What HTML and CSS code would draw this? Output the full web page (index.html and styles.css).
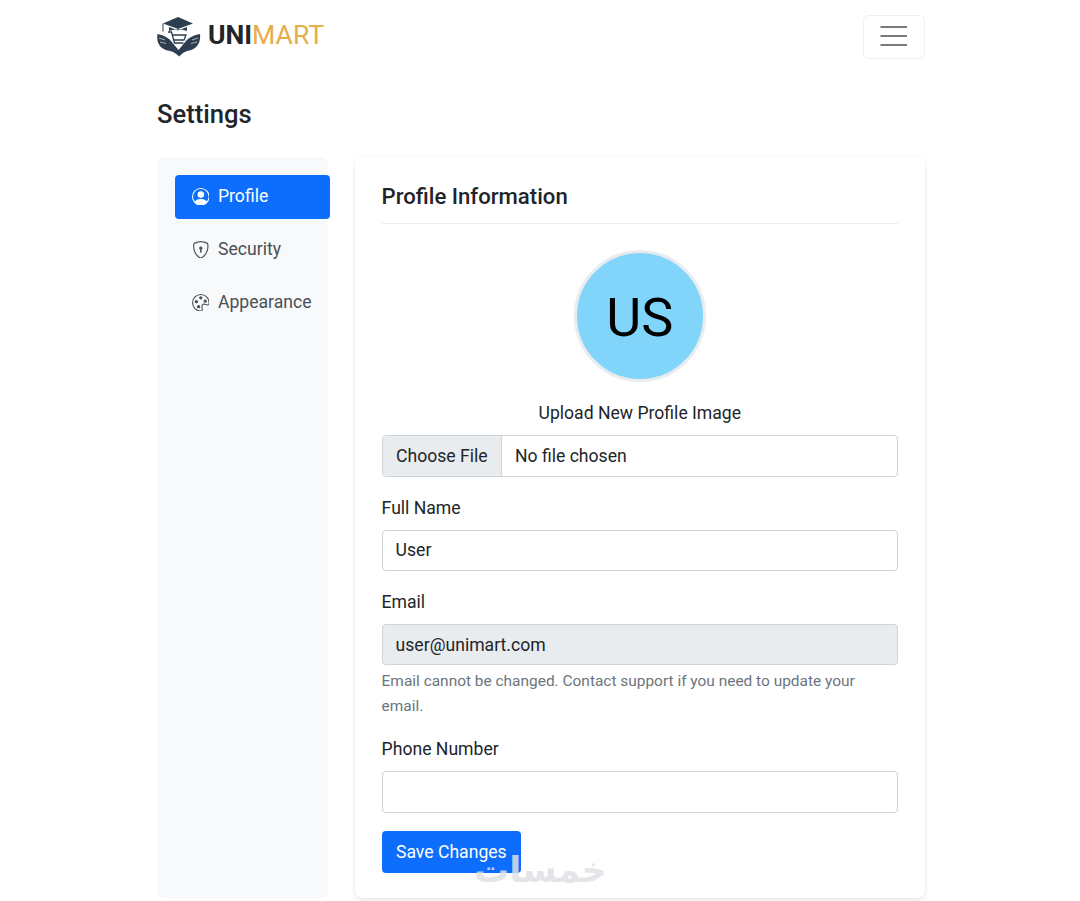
FILE: index.html
```html
<!DOCTYPE html>
<html>
<head>
    <title>Settings - UniMart</title>
    <link rel="stylesheet" href="styles.css">
</head>
<body>
    <nav class="navbar">
        <a class="brand" href="#">
            <svg class="brand-logo" viewBox="0 0 44 40" width="44" height="40">
                <!-- cap -->
                <path fill="#2c3e50" d="M21 0 L36 6.5 L21 12 L6 6.5 Z"/>
                <path fill="#2c3e50" d="M12 10 L21 13.5 L30 10 L30 14 Q21 10.5 12 14 Z"/>
                <rect fill="#2c3e50" x="5.5" y="6.5" width="1" height="8"/>
                <!-- cart -->
                <path fill="none" stroke="#2c3e50" stroke-width="1.3" d="M11 15 H14.5 L17.5 26 H26.5 M15.5 18 H29 L27 23 H17"/>
                <!-- wings -->
                <path fill="#2c3e50" d="M0.5 17 Q9 18.5 14 24 L21.5 33 L29 24 Q34 18.5 43 17 Q44 26 38 31 Q34 34 30 34 Q26 35 22 39.5 Q18 35 13 34 Q9 34 5 31 Q-1 26 0.5 17 Z"/>
                <path fill="none" stroke="#fff" stroke-width=".6" d="M2 21 L8 23 M3 25 L9 26.5 M41 21 L35 23 M40 25 L34 26.5"/>
            </svg>
            <span class="brand-text"><b>UNI</b><span class="brand-accent">MART</span></span>
        </a>
        <button type="button" class="navbar-toggler" aria-label="Menu">
            <svg viewBox="0 0 30 30" width="30" height="30">
                <path stroke="#767b80" stroke-width="2.2" d="M1.5 5H28M1.5 14H28M1.5 23H28"/>
            </svg>
        </button>
    </nav>

    <div class="container">
        <h1 class="page-title">Settings</h1>
        <div class="settings-row">
            <aside class="sidebar">
                <a class="side-link active" href="#">
                    <svg class="side-icon" viewBox="0 0 16 16" fill="currentColor">
                        <path d="M11 6a3 3 0 1 1-6 0 3 3 0 0 1 6 0z"/>
                        <path fill-rule="evenodd" d="M0 8a8 8 0 1 1 16 0A8 8 0 0 1 0 8zm8-7a7 7 0 0 0-5.468 11.37C3.242 11.226 4.805 10 8 10s4.757 1.225 5.468 2.37A7 7 0 0 0 8 1z"/>
                    </svg>
                    Profile
                </a>
                <a class="side-link" href="#">
                    <svg class="side-icon" viewBox="0 0 16 16" fill="currentColor">
                        <path d="M5.338 1.59a61.44 61.44 0 0 0-2.837.856.481.481 0 0 0-.328.39c-.554 4.157.726 7.19 2.253 9.188a10.725 10.725 0 0 0 2.287 2.233c.346.244.652.42.893.533.12.057.218.095.293.118a.55.55 0 0 0 .101.025.615.615 0 0 0 .1-.025c.076-.023.174-.061.294-.118.24-.113.547-.29.893-.533a10.726 10.726 0 0 0 2.287-2.233c1.527-1.997 2.807-5.031 2.253-9.188a.48.48 0 0 0-.328-.39c-.651-.213-1.75-.56-2.837-.855C9.552 1.29 8.531 1.067 8 1.067c-.53 0-1.552.223-2.662.524zM5.072.56C6.157.265 7.31 0 8 0s1.843.265 2.928.56c1.11.3 2.229.655 2.887.87a1.54 1.54 0 0 1 1.044 1.262c.596 4.477-.787 7.795-2.465 9.99a11.775 11.775 0 0 1-2.517 2.453 7.159 7.159 0 0 1-1.048.625c-.28.132-.581.24-.829.24s-.548-.108-.829-.24a7.158 7.158 0 0 1-1.048-.625 11.777 11.777 0 0 1-2.517-2.453C1.928 10.487.545 7.169 1.141 2.692A1.54 1.54 0 0 1 2.185 1.43 62.456 62.456 0 0 1 5.072.56z"/>
                        <path d="M9.5 6.5a1.5 1.5 0 0 1-1 1.415l.385 1.99a.5.5 0 0 1-.491.595h-.788a.5.5 0 0 1-.49-.595l.384-1.99a1.5 1.5 0 1 1 2-1.415z"/>
                    </svg>
                    Security
                </a>
                <a class="side-link" href="#">
                    <svg class="side-icon" viewBox="0 0 16 16" fill="currentColor">
                        <path d="M8 5a1.5 1.5 0 1 0 0-3 1.5 1.5 0 0 0 0 3zm4 3a1.5 1.5 0 1 0 0-3 1.5 1.5 0 0 0 0 3zM5.5 7a1.5 1.5 0 1 1-3 0 1.5 1.5 0 0 1 3 0zm.5 6a1.5 1.5 0 1 0 0-3 1.5 1.5 0 0 0 0 3z"/>
                        <path d="M16 8c0 3.15-1.866 2.585-3.567 2.07C11.42 9.763 10.465 9.473 10 10c-.603.683-.475 1.819-.351 2.92C9.826 14.495 9.996 16 8 16a8 8 0 1 1 8-8zm-8 7c.611 0 .654-.171.655-.176.078-.146.124-.464.07-1.119-.014-.168-.037-.37-.061-.591-.052-.464-.112-1.005-.118-1.462-.01-.707.083-1.61.704-2.314.369-.417.845-.578 1.272-.618.404-.038.812.026 1.16.104.343.077.702.186 1.025.284l.028.008c.346.105.658.199.953.266.653.148.904.083.991.024C14.717 9.38 15 9.161 15 8a7 7 0 1 0-7 7z"/>
                    </svg>
                    Appearance
                </a>
            </aside>

            <main class="card">
                <h2 class="card-title">Profile Information</h2>
                <div class="avatar-box">
                    <div class="avatar">US</div>
                    <label class="avatar-label">Upload New Profile Image</label>
                </div>
                <div class="file-input">
                    <span class="file-btn">Choose File</span>
                    <span class="file-name">No file chosen</span>
                </div>

                <div class="field">
                    <label for="name">Full Name</label>
                    <input id="name" class="form-control" type="text" value="User">
                </div>
                <div class="field">
                    <label for="email">Email</label>
                    <input id="email" class="form-control" type="text" value="user@unimart.com" disabled>
                    <div class="form-text">Email cannot be changed. Contact support if you need to update your email.</div>
                </div>
                <div class="field">
                    <label for="phone">Phone Number</label>
                    <input id="phone" class="form-control" type="text">
                </div>
                <button type="button" class="btn-save">Save Changes</button>
            </main>
        </div>
    </div>

    <div class="watermark">خمسات</div>
</body>
</html>
```

FILE: styles.css
```css
* { box-sizing: border-box; }
body { margin: 0; height: 901px; overflow: hidden; background: #fff; color: #212529; font-family: Roboto, "Liberation Sans", sans-serif; font-size: 17.6px; line-height: 1.5; }
a { text-decoration: none; }

.navbar { width: 768px; height: 74px; margin-left: 157px; display: flex; align-items: center; justify-content: space-between; }
.brand { display: flex; align-items: center; gap: 7px; margin-top: -1px; }
.brand-text { font-size: 26.6px; line-height: 1; margin-top: -3px; color: #212529; }
.brand-text b { font-weight: 700; }
.brand-accent { color: #e5ae49; }
.navbar-toggler { width: 62px; height: 44px; padding: 0; background: none; border: 1px solid #f0f0f1; border-radius: 5px; display: flex; align-items: center; justify-content: center; }

.container { width: 768px; margin-left: 157px; }
.page-title { margin: 24px 0 26px; font-size: 25.6px; font-weight: 500; line-height: 33px; }
.settings-row { display: flex; align-items: stretch; gap: 27px; }

.sidebar { width: 171px; height: 741px; padding: 17.5px 0 0 17.6px; background: #f8f9fa; border-radius: 8px; flex: none; }
.side-link { width: 155.4px; height: 44px; margin-bottom: 9px; padding-left: 17px; display: flex; align-items: center; gap: 8.8px; color: #495057; border-radius: 4px; font-size: 17.6px; }
.side-link.active { background: #0d6efd; color: #fff; }
.side-icon { width: 17.6px; height: 17.6px; flex: none; }

.card { flex: 1; height: 741px; padding: 22px 27px 0 26.6px; background: #fff; border-radius: 8px; box-shadow: 0 2px 5px rgba(0, 0, 0, .1); }
.card-title { margin: 0 0 26px; padding-bottom: 9px; font-size: 22.15px; font-weight: 500; line-height: 35px; border-bottom: 1px solid #eceded; }

.avatar-box { text-align: center; }
.avatar { width: 132px; height: 132px; margin: 0 auto 18px; padding-top: 3px; display: flex; align-items: center; justify-content: center; background: #81d4fa; border: 3px solid #e9ecef; border-radius: 50%; color: #000; font-size: 54px; }
.avatar-label { display: block; margin-bottom: 9px; }

.file-input { height: 42px; display: flex; align-items: stretch; border: 1px solid #ced4da; border-radius: 4px; overflow: hidden; }
.file-btn { padding: 0 13.4px; display: flex; align-items: center; background: #e9ecef; border-right: 1px solid #ced4da; }
.file-name { padding-left: 13px; display: flex; align-items: center; }

.field { margin-top: 17.6px; }
.field label { display: block; margin-bottom: 9px; line-height: 26px; }
.form-control { width: 100%; height: 41.4px; padding: 0 13px 1px; display: block; border: 1px solid #ced4da; border-radius: 4px; background: #fff; color: #212529; font: inherit; }
.form-control:disabled { padding-bottom: 0; background: #e9ecef; }
.form-text { margin-top: 3.2px; color: #6c757d; font-size: 15.45px; line-height: 25px; }

.btn-save { height: 41.4px; margin-top: 18.6px; padding: 0 14.4px; border: none; border-radius: 4px; background: #0d6efd; color: #fff; font: inherit; }

.watermark { position: absolute; left: 474px; top: 844px; color: rgba(223, 225, 228, .85); font-family: "DejaVu Sans", sans-serif; font-size: 35px; font-weight: 700; line-height: 52px; }
```
